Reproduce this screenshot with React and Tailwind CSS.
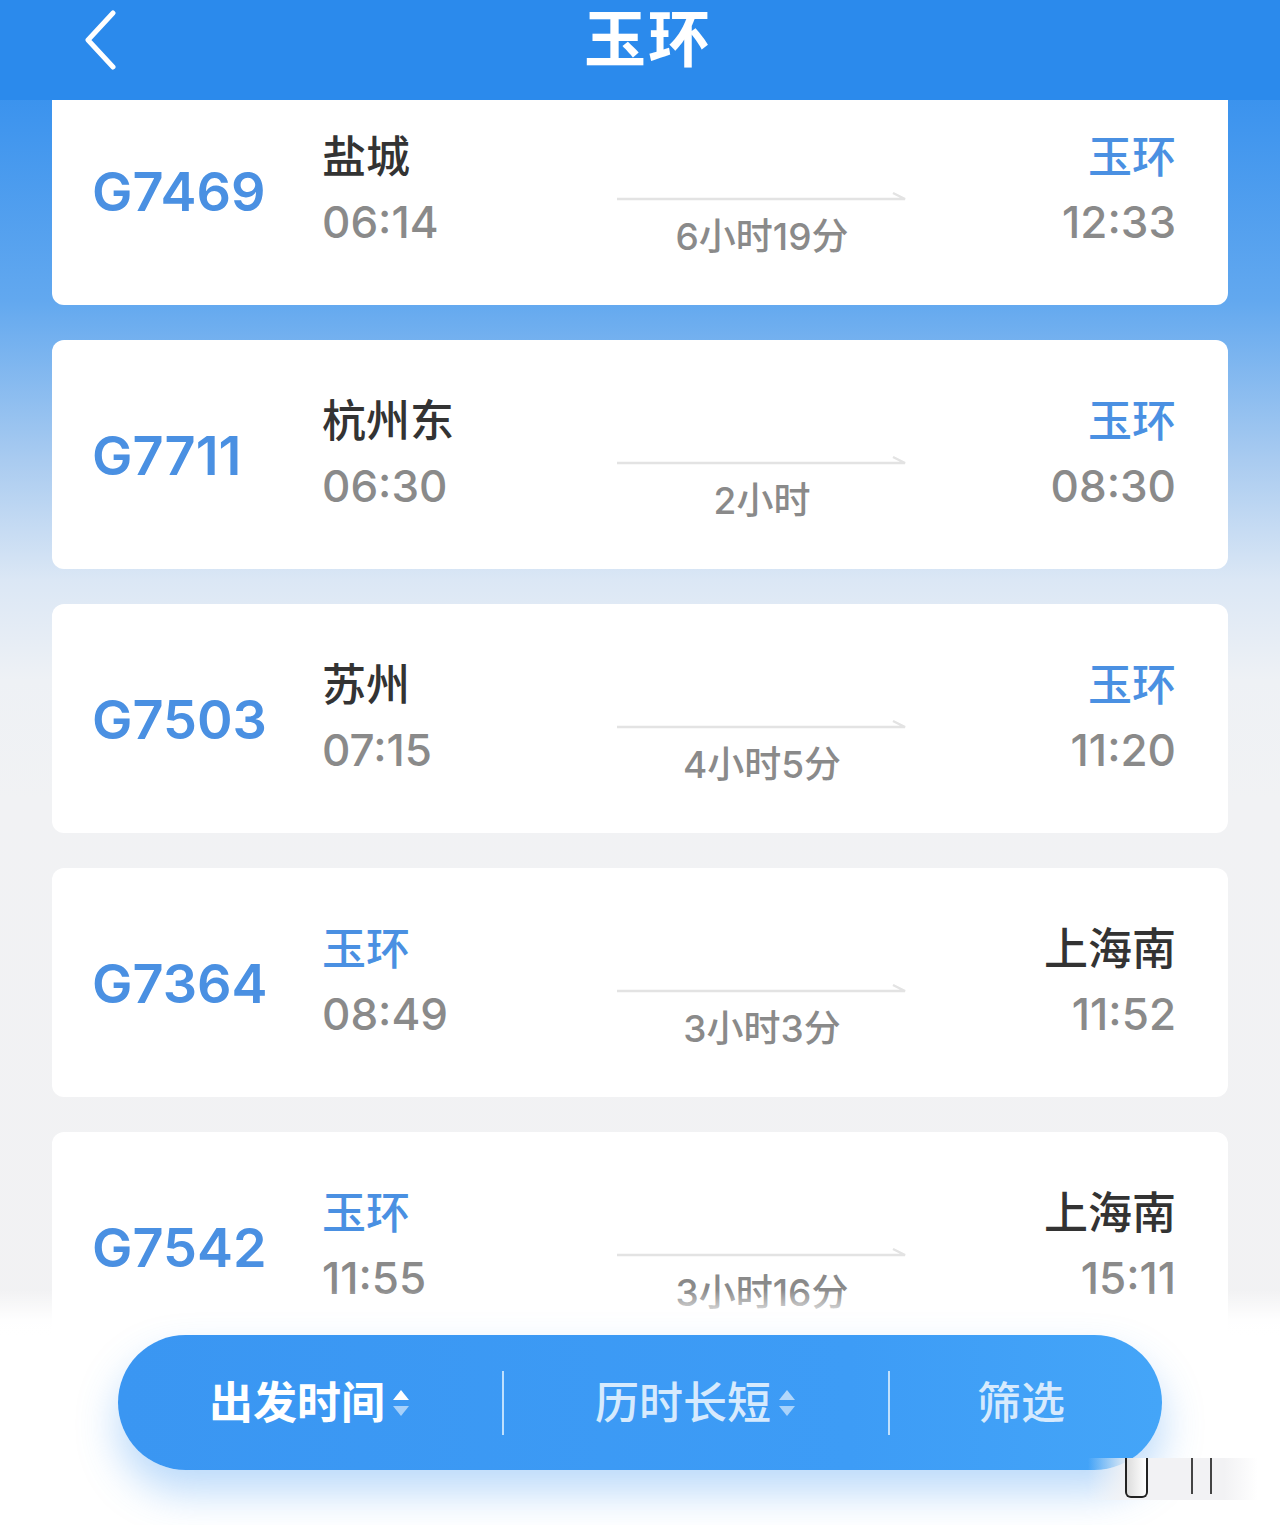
import React from 'react';

const trains = [
  { no: 'G7469', from: '盐城', fromBlue: false, dep: '06:14', to: '玉环', toBlue: true, arr: '12:33', dur: '6小时19分' },
  { no: 'G7711', from: '杭州东', fromBlue: false, dep: '06:30', to: '玉环', toBlue: true, arr: '08:30', dur: '2小时' },
  { no: 'G7503', from: '苏州', fromBlue: false, dep: '07:15', to: '玉环', toBlue: true, arr: '11:20', dur: '4小时5分' },
  { no: 'G7364', from: '玉环', fromBlue: true, dep: '08:49', to: '上海南', toBlue: false, arr: '11:52', dur: '3小时3分' },
  { no: 'G7542', from: '玉环', fromBlue: true, dep: '11:55', to: '上海南', toBlue: false, arr: '15:11', dur: '3小时16分' },
];

const font = { fontFamily: 'Inter, "Noto Sans CJK SC", sans-serif' };

const SortArrows = ({ dim }) => (
  <svg width="20" height="40" viewBox="0 0 20 40" className="ml-[6px]">
    <path d="M2 17 L10 7 L18 17 Z" fill={dim ? 'rgba(255,255,255,0.6)' : '#ffffff'} />
    <path d="M2 23 L10 33 L18 23 Z" fill="rgba(255,255,255,0.55)" />
  </svg>
);

const TrainCard = ({ t }) => (
  <div className="h-[229px] shrink-0 bg-white rounded-[12px] flex items-start pl-[40px] pr-[52px]">
    <div className="w-[230px] pt-[84px] text-[54px] leading-[64px] font-semibold text-[#4a90e2]">
      {t.no}
    </div>
    <div className="w-[250px] pt-[53px] flex flex-col">
      <span className={`text-[44px] leading-[56px] font-medium ${t.fromBlue ? 'text-[#4a90e2]' : 'text-[#333333]'}`}>{t.from}</span>
      <span className="mt-[12px] text-[44px] leading-[50px] font-medium text-[#8a8a8a]">{t.dep}</span>
    </div>
    <div className="w-[380px] pt-[114px] flex flex-col items-center">
      <svg width="290" height="12" viewBox="0 0 290 12">
        <path d="M0 9 H288 L276 3" fill="none" stroke="#e3e3e3" strokeWidth="2.5" />
      </svg>
      <span className="mt-[14px] text-[37px] leading-[42px] font-medium text-[#8a8a8a]">{t.dur}</span>
    </div>
    <div className="flex-1 pt-[53px] flex flex-col items-end">
      <span className={`text-[44px] leading-[56px] font-medium ${t.toBlue ? 'text-[#4a90e2]' : 'text-[#333333]'}`}>{t.to}</span>
      <span className="mt-[12px] text-[44px] leading-[50px] font-medium text-[#8a8a8a]">{t.arr}</span>
    </div>
  </div>
);

export default function App() {
  return (
    <div
      className="relative w-[1280px] h-[1525px] overflow-hidden bg-[linear-gradient(180deg,#2b8aec_0px,#3f95ee_120px,#62a8ef_300px,#a9cbf0_460px,#dbe7f5_580px,#eef1f5_680px,#f1f2f4_800px,#f2f2f3_1525px)] flex flex-col"
      style={font}
    >
      <div className="h-[100px] shrink-0 bg-[#2b8aec] relative z-10 flex items-center justify-center pl-[16px]">
        <svg width="40" height="60" viewBox="0 0 40 60" className="absolute left-[80px] top-[10px]">
          <path d="M33 3 L8 30 L33 57" fill="none" stroke="#ffffff" strokeWidth="5" strokeLinecap="round" strokeLinejoin="round" />
        </svg>
        <span className="text-[62px] leading-[80px] font-bold text-white tracking-[2px] -mt-[20px]">玉环</span>
      </div>

      <div className="flex-1 overflow-hidden">
        <div className="-mt-[24px] px-[52px] flex flex-col gap-[35px]">
          {trains.map((t) => (
            <TrainCard key={t.no} t={t} />
          ))}
        </div>
      </div>

      <div className="absolute left-0 right-0 bottom-0 h-[235px] bg-[linear-gradient(180deg,rgba(255,255,255,0)_0px,rgba(255,255,255,0.95)_30px,#ffffff_45px)] flex justify-center pt-[45px]">
        <div className="w-[1044px] h-[135px] rounded-full bg-[linear-gradient(90deg,#3a96f2,#3d9cf6_70%,#44a5f8)] shadow-[0_22px_40px_rgba(60,150,240,0.35)] flex items-center">
          <div className="w-[384px] flex items-center justify-center">
            <span className="text-[44px] leading-[50px] font-bold text-white">出发时间</span>
            <SortArrows />
          </div>
          <div className="w-[2px] h-[64px] bg-[#bfe0fd]" />
          <div className="w-[384px] flex items-center justify-center">
            <span className="text-[44px] leading-[50px] font-medium text-[#d6eafd]">历时长短</span>
            <SortArrows dim />
          </div>
          <div className="w-[2px] h-[64px] bg-[#bfe0fd]" />
          <div className="flex-1 flex items-center justify-center pr-[10px]">
            <span className="text-[44px] leading-[50px] font-medium text-[#d6eafd]">筛选</span>
          </div>
        </div>
      </div>

      <div className="absolute left-[1088px] top-[1458px] w-[170px] h-[42px] bg-[linear-gradient(90deg,rgba(240,240,242,0),#f2f2f4_25%,#f2f2f4_80%,rgba(240,240,242,0))] flex items-start pl-[37px]">
        <div className="w-[23px] h-[40px] border-x-[2px] border-b-[2px] border-[#222] rounded-b-[6px] bg-[linear-gradient(90deg,#ddd,#fff)]" />
        <div className="ml-[43px] w-[2px] h-[36px] bg-[#444]" />
        <div className="ml-[17px] w-[2px] h-[36px] bg-[#444]" />
      </div>
    </div>
  );
}
